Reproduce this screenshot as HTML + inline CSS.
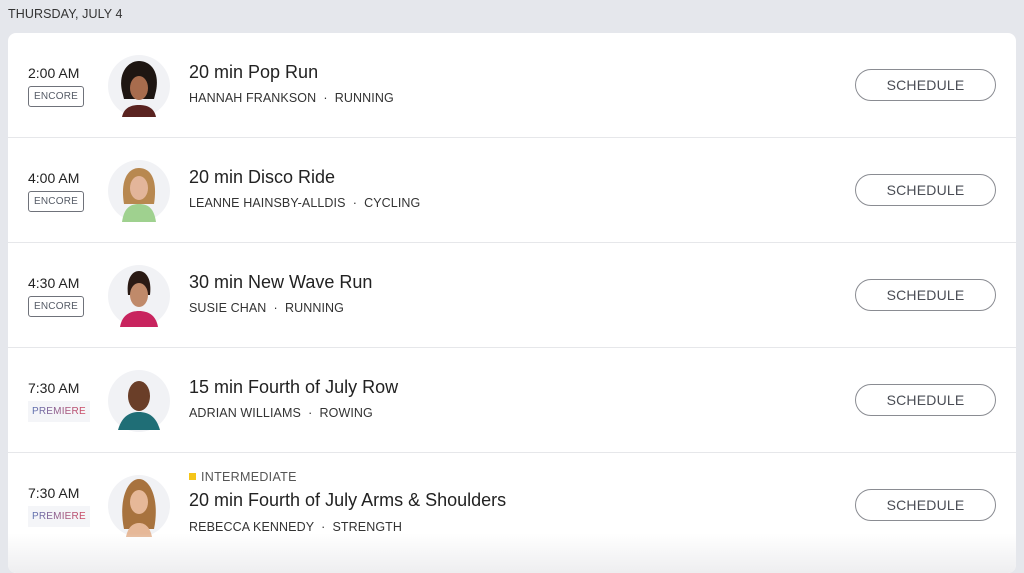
<!DOCTYPE html>
<html><head><meta charset="utf-8"><style>
*{margin:0;padding:0;box-sizing:border-box}
body{width:1024px;height:554px;overflow:hidden;background:#e5e7ec;font-family:"Liberation Sans",Arial,sans-serif;color:#222;position:relative}
.date{position:absolute;left:8px;top:7px;font-size:12.5px;color:#333;letter-spacing:.1px}
.card{position:absolute;left:8px;top:33px;width:1008px;height:540px;background:#fff;border-radius:8px;overflow:hidden}
.row{position:absolute;left:0;width:1008px;height:105px;border-bottom:1px solid #e6e7ea}
.time{position:absolute;left:20px;font-size:14px;color:#222}
.tag{position:absolute;left:20px;font-size:10px;letter-spacing:.2px;height:21px;line-height:19px;padding:0 5px}
.enc{border:1px solid #6f727a;border-radius:3px;color:#555b66}
.pre{background:#f4f5f8;line-height:21px;color:#8a5a8a;padding:0 4px}
.pre span{background:linear-gradient(90deg,#5b6fb0,#d0455e);-webkit-background-clip:text;color:transparent}
.av{position:absolute;left:100px;width:62px;height:62px}
.title{position:absolute;left:181px;font-size:18px;color:#222}
.sub{position:absolute;left:181px;font-size:12.5px;color:#333;letter-spacing:.1px}
.lvl{position:absolute;left:181px;font-size:12.5px;color:#555;letter-spacing:.3px}
.lvl i{display:inline-block;width:7px;height:7px;background:#f5c518;margin-right:5px;vertical-align:1px}
.btn{position:absolute;left:847px;width:141px;height:32px;border:1px solid #8a8c92;border-radius:16px;text-align:center;line-height:30px;font-size:14px;color:#4a4d55;letter-spacing:.2px}
.fade{position:absolute;left:0;top:500px;width:1008px;height:40px;background:linear-gradient(rgba(255,255,255,0),#eeeef0)}
</style></head><body>
<div class="date">THURSDAY, JULY 4</div>
<div class="card">
<div class="row" style="top:0">
 <div class="time" style="top:32px">2:00 AM</div><div class="tag enc" style="top:53px">ENCORE</div>
 <svg class="av" style="top:22px" viewBox="0 0 62 62"><circle cx="31" cy="31" r="31" fill="#f1f2f5"/><path d="M14 36C10 18 20 6 31 6S52 16 48 36L46 44H16Z" fill="#1e1612"/><ellipse cx="31" cy="33" rx="9" ry="12" fill="#a86c4d"/><path d="M14 62C16 52 24 50 31 50S46 52 48 62Z" fill="#5a2320"/></svg>
 <div class="title" style="top:29px">20 min Pop Run</div><div class="sub" style="top:58px">HANNAH FRANKSON &nbsp;·&nbsp; RUNNING</div>
 <div class="btn" style="top:36px">SCHEDULE</div></div>
<div class="row" style="top:105px">
 <div class="time" style="top:32px">4:00 AM</div><div class="tag enc" style="top:53px">ENCORE</div>
 <svg class="av" style="top:22px" viewBox="0 0 62 62"><circle cx="31" cy="31" r="31" fill="#f1f2f5"/><path d="M16 44C12 20 20 8 31 8S50 18 46 44Z" fill="#b88850"/><ellipse cx="31" cy="28" rx="9" ry="12" fill="#e3b59a"/><path d="M14 62C16 48 22 44 31 44S46 48 48 62Z" fill="#9fd18f"/></svg>
 <div class="title" style="top:29px">20 min Disco Ride</div><div class="sub" style="top:58px">LEANNE HAINSBY-ALLDIS &nbsp;·&nbsp; CYCLING</div>
 <div class="btn" style="top:36px">SCHEDULE</div></div>
<div class="row" style="top:210px">
 <div class="time" style="top:32px">4:30 AM</div><div class="tag enc" style="top:53px">ENCORE</div>
 <svg class="av" style="top:22px" viewBox="0 0 62 62"><circle cx="31" cy="31" r="31" fill="#f1f2f5"/><path d="M20 30C18 14 24 6 31 6S44 14 42 30Z" fill="#2a1a14"/><ellipse cx="31" cy="30" rx="9" ry="12" fill="#c08a6a"/><path d="M12 62C14 50 22 46 31 46S48 50 50 62Z" fill="#c8245e"/></svg>
 <div class="title" style="top:29px">30 min New Wave Run</div><div class="sub" style="top:58px">SUSIE CHAN &nbsp;·&nbsp; RUNNING</div>
 <div class="btn" style="top:36px">SCHEDULE</div></div>
<div class="row" style="top:315px">
 <div class="time" style="top:32px">7:30 AM</div><div class="tag pre" style="top:53px"><span>PREMIERE</span></div>
 <svg class="av" style="top:22px" viewBox="0 0 62 62"><circle cx="31" cy="31" r="31" fill="#f1f2f5"/><ellipse cx="31" cy="26" rx="11" ry="15" fill="#6a3e28"/><path d="M10 60C14 46 22 42 31 42S48 46 52 60Z" fill="#1f6e76"/></svg>
 <div class="title" style="top:29px">15 min Fourth of July Row</div><div class="sub" style="top:58px">ADRIAN WILLIAMS &nbsp;·&nbsp; ROWING</div>
 <div class="btn" style="top:36px">SCHEDULE</div></div>
<div class="row" style="top:420px;border:none">
 <div class="time" style="top:32px">7:30 AM</div><div class="tag pre" style="top:53px"><span>PREMIERE</span></div>
 <svg class="av" style="top:22px" viewBox="0 0 62 62"><circle cx="31" cy="31" r="31" fill="#f1f2f5"/><path d="M16 54C10 24 20 4 31 4S52 24 46 54Z" fill="#a8733e"/><ellipse cx="31" cy="27" rx="9" ry="12" fill="#e6b898"/><path d="M18 62C20 52 25 48 31 48S42 52 44 62Z" fill="#e6b898"/></svg>
 <div class="lvl" style="top:17px"><i></i>INTERMEDIATE</div>
 <div class="title" style="top:37px">20 min Fourth of July Arms &amp; Shoulders</div><div class="sub" style="top:67px">REBECCA KENNEDY &nbsp;·&nbsp; STRENGTH</div>
 <div class="btn" style="top:36px">SCHEDULE</div></div>
<div class="fade"></div>
</div>
</body></html>
